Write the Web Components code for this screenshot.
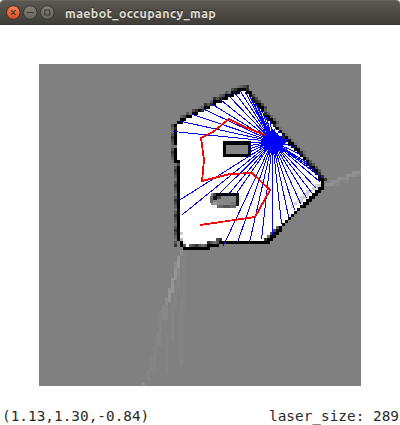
<!DOCTYPE html>
<html lang="en"><head><meta charset="utf-8"><title>maebot_occupancy_map</title>
<style>html,body{margin:0;height:100%;background:#fff;overflow:hidden}</style></head><body>
<app-window><title-bar slot="bar">maebot_occupancy_map</title-bar><occupancy-map></occupancy-map><status-line slot="status"><span>(1.13,1.30,-0.84)</span><span slot="end">laser_size: 289</span></status-line></app-window>
<script>
class AppWindow extends HTMLElement{constructor(){super();this.attachShadow({mode:'open'}).innerHTML=`<style>:host{display:grid;grid-template-rows:25px 1fr 17px;height:425px;width:400px;box-sizing:border-box;background:#fff}main{padding:39px 0 0 39px}</style><slot name="bar"></slot><main><slot></slot></main><slot name="status"></slot>`}}
class TitleBar extends HTMLElement{constructor(){super();this.attachShadow({mode:'open'}).innerHTML=`<style>:host{display:flex;align-items:center;box-sizing:border-box;height:25px;padding-left:5px;background:linear-gradient(#5b5850,#403e39 96%,#35332f);border-top:1px solid #65625a;border-radius:4px 4px 0 0;color:#dfdbd2;font:bold 12.5px Ubuntu,"Noto Sans",sans-serif;letter-spacing:.36px}svg{flex:none;margin-right:9px}span{display:block;white-space:nowrap;text-shadow:0 -1px #292822}</style><svg width="51" height="24" viewBox="0 0 51 24"><defs><linearGradient id="o" x2="0" y2="1"><stop stop-color="#f58158"/><stop offset="1" stop-color="#df4b1d"/></linearGradient><linearGradient id="g" x2="0" y2="1"><stop stop-color="#85827b"/><stop offset="1" stop-color="#66635c"/></linearGradient></defs><g stroke="#35332e"><circle cx="8.3" cy="11.5" r="6.8" fill="url(#o)"/><circle cx="25.3" cy="11.5" r="6.8" fill="url(#g)"/><circle cx="42.3" cy="11.5" r="6.8" fill="url(#g)"/></g><g fill="none" stroke="#3b3933" stroke-width="1.2"><path d="M6 9.2l4.6 4.6m0-4.6L6 13.8M22 11.5h6.6M39.8 9h5v5h-5z"/></g></svg><span><slot></slot></span>`}}
class StatusLine extends HTMLElement{constructor(){super();this.attachShadow({mode:'open'}).innerHTML=`<style>:host{display:flex;justify-content:space-between;padding:0 1px 0 2px;height:17px;font:14.4px/17px "DejaVu Sans Mono",monospace;color:#2a2a2a;white-space:pre}</style><slot></slot><slot name="end"></slot>`}}
class OccupancyMap extends HTMLElement{constructor(){super();const root=this.attachShadow({mode:'open'});
const C=3,N=108,grid=new Map();
const put=(i,j,c)=>grid.set(i+','+j,c);
const cell=(x,y)=>[Math.floor((x-39)/C),Math.floor((y-64)/C)];
const trace=(pts,f)=>{for(let k=1;k<pts.length;k++){const [x,y]=pts[k-1],[u,v]=pts[k],n=Math.ceil(Math.max(Math.abs(u-x),Math.abs(v-y)));for(let t=0;t<=n;t++)f(...cell(x+(u-x)*t/n,y+(v-y)*t/n),k)}};
const wall=[[175,131],[175,125],[180,121],[238,91],[246,90],[250,94],[273,123],[294,146],[312,167],[323,181],[323,187],[293,214],[267,242],[222,243],[207,247],[186,249],[182,246],[180,240],[179,164],[176,162],[175,131]];
const inside=(x,y)=>{let r=false;for(let a=0,b=wall.length-1;a<wall.length;b=a++){const [p,q]=wall[a],[s,t]=wall[b];if((q>y)!==(t>y)&&x<(s-p)*(y-q)/(t-q)+p)r=!r}return r};
const insideCell=(i,j)=>inside(39+i*C+1.5,64+j*C+1.5);
for(let j=0;j<N;j++)for(let i=0;i<N;i++)if(insideCell(i,j))put(i,j,'#fff');
const dark=['#4c4c4c','#747474','#333','#606060','#555'];
const halo=(pts,a,b)=>trace(pts,(i,j)=>put(i+a,j+b,dark[(i*7+j*13)%5]));
halo([[180,121],[238,91],[246,90]],0,-1);
halo([[250,94],[273,123],[294,146],[312,167],[322,180]],1,0);
halo([[179,164],[179,244]],-1,0);
halo([[175,125],[175,160]],-1,0);
halo([[186,249],[207,247],[220,243]],0,-1);
halo([[264,242],[267,242],[278,230]],0,-1);
trace([[320,188],[308,198],[296,208]],(i,j)=>put(i-1,j-1,'#d0d0d0'));
trace(wall,(i,j,k)=>put(i,j,(i*5+j*3)%9===0&&k<9?'#2c2c2c':'#000'));
for(const [x,y,c] of [[184,246,'#555'],[187,246,'#fff'],[183,243,'#eee'],[182,238,'#bbb'],[182,232,'#ccc'],[256,106,'#ccc'],[319,185,'#ccc'],[316,188,'#ddd'],[176,147,'#777'],[179,163,'#444']])put(...cell(x,y),c);
let s='';
for(const [k,c] of grid){const [i,j]=k.split(',');s+=`<rect x="${39+i*C}" y="${64+j*C}" width="3" height="3" fill="${c}"/>`}
// faint sensor leakage beyond the walls
const px=(x,y,w,h,c)=>`<rect x="${x}" y="${y}" width="${w}" height="${h}" fill="${c}"/>`;
let leak='';
for(const r of [[325,183,9,3,'#919191'],[331,180,9,3,'#8e8e8e'],[334,183,6,3,'#858585'],[337,177,12,3,'#8d8d8d'],[343,180,6,3,'#868686'],[346,174,9,3,'#8f8f8f'],[352,171,9,3,'#919191'],[355,174,6,3,'#888'],
[180,250,3,6,'#8c8c8c'],[177,256,3,12,'#999'],[174,268,3,12,'#959595'],[174,262,3,6,'#8c8c8c'],[177,268,3,8,'#898989'],[171,278,3,15,'#959595'],[168,288,3,14,'#949494'],[165,298,3,12,'#8d8d8d'],[162,305,6,15,'#888'],[159,310,3,22,'#858585'],[177,276,3,12,'#868686'],[174,284,3,24,'#848484'],[180,300,3,65,'#848484'],[183,252,3,60,'#838383'],[171,306,3,36,'#848484'],[165,330,3,44,'#838383'],[156,332,6,14,'#858585'],[153,346,3,18,'#838383'],[150,357,6,14,'#848484'],[147,370,3,10,'#848484'],[142,383,3,3,'#909090']])leak+=px(...r);
let blocks=px(223,141,28,16,'#000')+px(226,145,22,9,'#868686')+px(211,193,28,12,'#868686')+px(216,193,23,3,'#000')+px(213,193,3,3,'#444')+px(210,196,3,7,'#666')+px(213,196,4,4,'#111')+px(217,196,4,3,'#444')+px(236,196,3,10,'#181818')+px(239,196,2,6,'#ddd')+px(213,202,4,4,'#999')+px(217,205,19,3,'#686868')+px(223,205,7,3,'#555')+px(211,205,6,3,'#eee')+px(230,202,6,3,'#777');
const ends=[[173,131],[181,121],[192,114],[204,109],[212,104],[221,100],[228,95],[234,92],[240,91],[245,92],[250,97],[255,102],[258,107],[262,111],[266,117],[270,121],[275,126],[279,130],[284,134],[288,139],[294,146],[300,154],[308,163],[315,170],[321,177],[319,181],[315,187],[311,192],[306,197],[300,203],[294,209],[288,216],[281,223],[272,234],[261,239],[249,242],[237,242],[223,245],[182,214],[180,199],[218,194],[228,194],[236,193],[250,142],[250,145],[250,148],[250,151],[250,155]];
root.innerHTML=`<style>:host{display:block;width:322px;height:322px;background:#808080}svg{display:block}</style><svg width="322" height="322" viewBox="39 64 322 322" shape-rendering="crispEdges">${leak}${s}${blocks}
<path d="M272.5 141.5${ends.map(p=>`L${p[0]+.5} ${p[1]+.5}L272.5 141.5`).join('')}" stroke="#00f" fill="none"/><path fill="#00f" d="M273 129l4 5 10 7-5 5-9 9-13-12 5-8z"/>
<path d="M265 135L245 127L229 119L213 132L201 138L204 160L202 181L230 174L252 173L270 190L255 217L200 225" fill="none" stroke="#f00" stroke-width="1.8"/></svg>`}}
customElements.define('app-window',AppWindow);customElements.define('title-bar',TitleBar);customElements.define('status-line',StatusLine);customElements.define('occupancy-map',OccupancyMap);
</script></body></html>
